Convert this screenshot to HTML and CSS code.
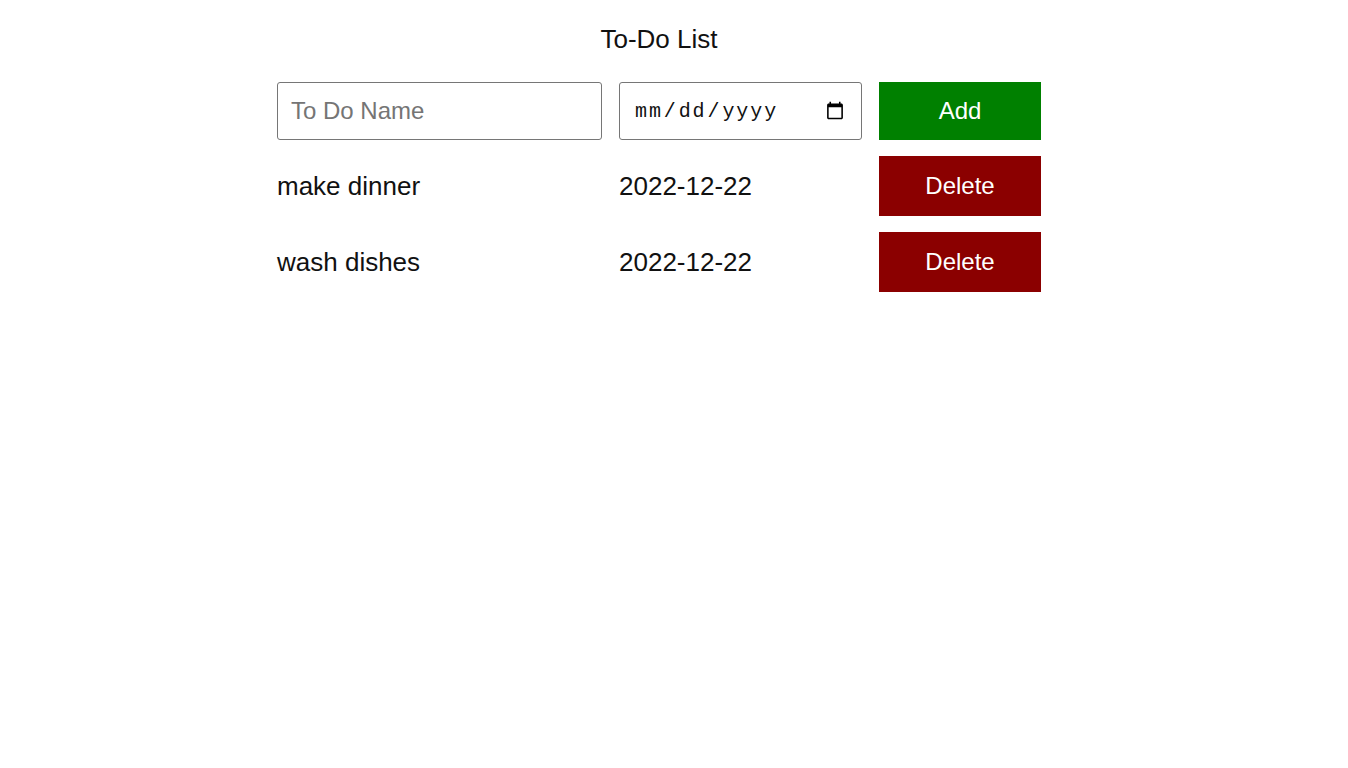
FILE: index.html
```html
<!DOCTYPE html>
<html>
<head>
<meta charset="utf-8">
<link rel="stylesheet" href="styles.css">
</head>
<body>
<div class="page">
  <h1 class="title">To-Do List</h1>
  <div class="grid">
    <input class="name-input" type="text" placeholder="To Do Name">
    <input class="date-input" type="date">
    <button class="btn add">Add</button>

    <div class="cell">make dinner</div>
    <div class="cell">2022-12-22</div>
    <button class="btn delete">Delete</button>

    <div class="cell">wash dishes</div>
    <div class="cell">2022-12-22</div>
    <button class="btn delete">Delete</button>
  </div>
</div>
</body>
</html>
```
FILE: styles.css
```css
html, body {
  margin: 0;
  padding: 0;
  background: #fff;
}
body {
  font-family: "Liberation Sans", Arial, sans-serif;
  color: #000;
}
.page {
  width: 1318px;
  display: flex;
  flex-direction: column;
  align-items: center;
}
.title {
  margin: 0;
  padding-top: 23px;
  height: 82px;
  box-sizing: border-box;
  font-size: 26px;
  font-weight: normal;
  line-height: 32px;
  color: #111;
}
.grid {
  display: grid;
  grid-template-columns: 325px 243px 162px;
  grid-auto-rows: 60px;
  grid-template-rows: 58px;
  column-gap: 17px;
  row-gap: 16px;
  align-items: center;
}
.name-input, .date-input {
  box-sizing: border-box;
  height: 58px;
  border: 1px solid #767676;
  border-radius: 3px;
  padding: 0 13px;
  margin: 0;
  width: 100%;
  font-size: 24px;
  font-family: "Liberation Sans", Arial, sans-serif;
}
.name-input::placeholder {
  color: #757575;
}
.date-input {
  font-family: "Liberation Mono", "DejaVu Sans Mono", monospace;
  font-size: 20px;
  letter-spacing: 1.9px;
  padding: 0 14px 0 14px;
  color: #111;
}
.cell {
  font-size: 26px;
  color: #111;
}
.btn {
  height: 100%;
  width: 100%;
  border: none;
  margin: 0;
  color: #fff;
  font-size: 24px;
  font-family: "Liberation Sans", Arial, sans-serif;
}
.add {
  background: #008000;
}
.delete {
  background: #8b0000;
}
```
